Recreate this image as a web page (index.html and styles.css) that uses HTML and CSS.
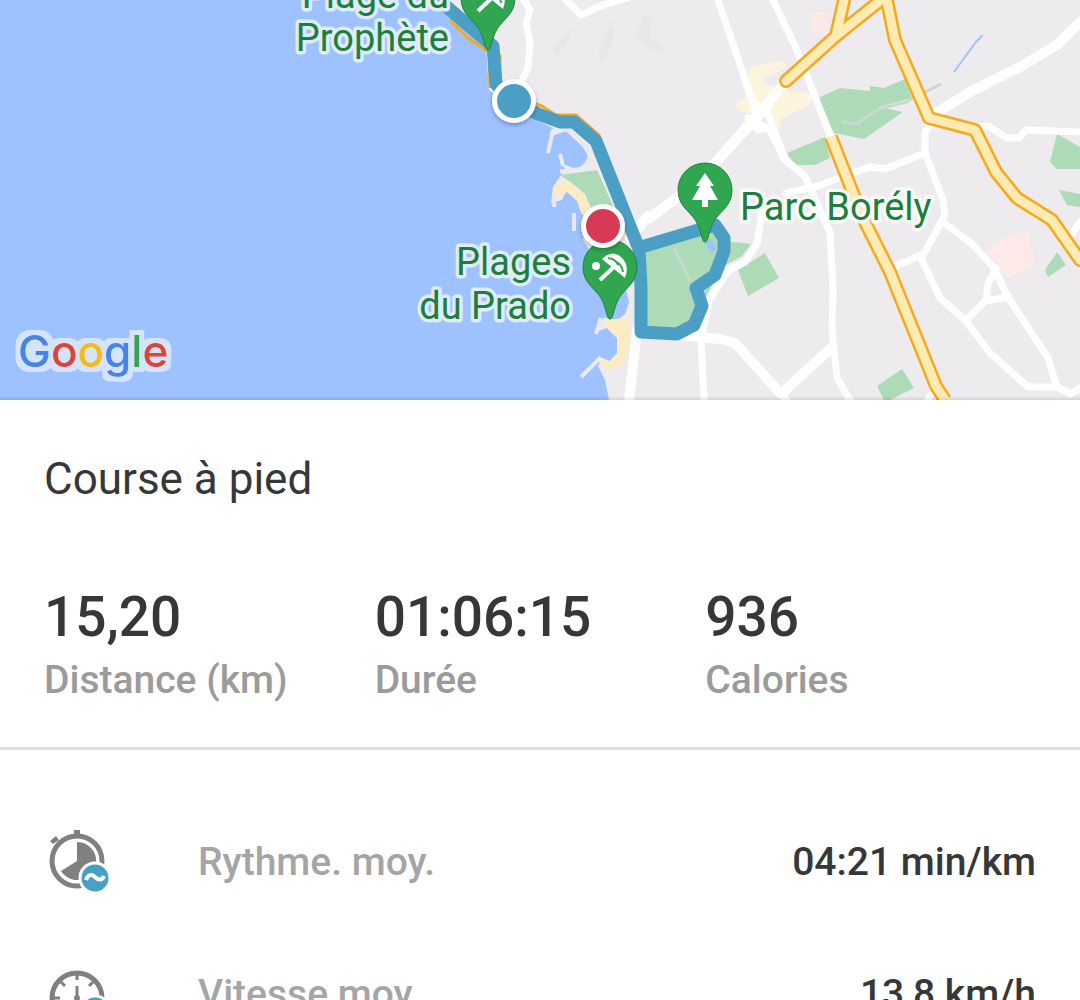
FILE: index.html
```html
<!DOCTYPE html>
<html lang="fr">
<head>
<meta charset="utf-8">
<meta name="viewport" content="width=device-width, initial-scale=1">
<title>Course à pied</title>
<link rel="stylesheet" href="styles.css">
</head>
<body>
<main class="activity">
  <section class="map" aria-label="Parcours">
    <svg class="map-canvas" viewBox="0 0 1080 400" role="img" aria-label="Carte du parcours">
      <defs>
        <filter id="shadow" x="-30%" y="-30%" width="160%" height="160%">
          <feDropShadow dx="0" dy="2" stdDeviation="2" flood-color="#000" flood-opacity=".3"/>
        </filter>
        <filter id="halo" x="-10%" y="-20%" width="120%" height="140%" color-interpolation-filters="sRGB">
          <feMorphology in="SourceAlpha" operator="dilate" radius="5" result="grown"/>
          <feFlood flood-color="#d6e4fb"/>
          <feComposite in2="grown" operator="in" result="ring"/>
          <feMerge><feMergeNode in="ring"/><feMergeNode in="SourceGraphic"/></feMerge>
        </filter>
        <linearGradient id="edge" x2="0" y2="1">
          <stop offset="0" stop-color="#000" stop-opacity="0"/>
          <stop offset="1" stop-color="#000" stop-opacity=".1"/>
        </linearGradient>
        <path id="pin" d="M0 0C-3 0-3-7-7-17C-13-31-27-34-27-52A27 27 0 0 1 27-52C27-34 13-31 7-17C3-7 3 0 0 0Z"/>
        <g id="parasol" fill="none" stroke="#fff">
          <path d="M-10-39L7-55" stroke-width="4"/>
          <path d="M-8-60Q2-70 11-62Q20-54 15-41Z" fill="#fff" stroke="none"/>
          <path d="M-2-61Q6-60 8-54M13-47Q12-54 7-57" stroke="#30a650" stroke-width="2"/>
        </g>
      </defs>

      <!-- land and sea -->
      <rect class="land" width="1080" height="400"/>
      <path class="sea" d="M0 0H440L462 24L486 48L489 90L512 108L553 128L552 136L566 131L584 148L590 160L587 166L573 168L561 163L565 169L553 187L551 203L562 200L566 191L578 198L583 213L585 224L583 240L602 270L626 290L629 302L625 314L615 322L604 317L598 331L607 328L617 338L617 353L609 362L602 358L598 366L605 380L609 400H0Z"/>
      <g class="pier">
        <path d="M553 130L548 153M560 154L563 166M555 193L554 207M601 318L596 334M601 357L581 377M574 213V231"/>
        <path d="M552 131Q568 125 580 139L590 155Q588 167 574 172L560 171" fill="none"/>
      </g>
      <path class="sand" d="M553 187L569 179L588 193L594 212L582 215L577 201L567 192L556 198ZM604 320L628 318L630 350L620 367L609 370L597 360L602 358L610 361L617 354V338L607 328Z"/>

      <!-- parks, blocks -->
      <g class="park">
        <path d="M560 175L597 170L615 210L592 210L585 194L572 183Z"/>
        <path d="M638 248L706 224L725 238L720 268L693 287L700 308L690 328L641 332Z"/>
        <path d="M725 241L751 244L742 256L724 266ZM738 270L765 253L779 278L748 296ZM705 286L714 281L703 303Z"/>
        <path d="M818 98L840 88L870 91V86L884 88L905 79L912 98L879 107L903 112L864 139L834 133ZM787 153L825 137L830 158L815 165L795 165Z"/>
        <path d="M1057 134L1080 147V169H1057L1050 162ZM1059 190L1080 194V207L1067 205ZM1045 270L1057 252L1066 265L1048 277ZM877 386L902 369L914 388L890 400H884Z"/>
      </g>
      <path class="mall" d="M747 79L752 66L784 61L787 67L763 79L765 84L787 90L814 94L811 104L780 119L781 131L773 119L740 111L735 105L746 97L743 87Z"/>
      <path class="clinic" d="M986 252L1006 237L1028 232L1030 247L1036 260L1029 270L1008 278ZM812 12H828V34H812Z"/>
      <path class="rock" d="M553 48L574 25L567 43L556 56ZM599 50L612 20L614 40L602 62ZM635 36L645 13L652 23L651 38L668 54L650 49Z"/>
      <path class="brook" d="M954 72L976 42L983 35M640 246L665 236"/>
      <path class="pond" d="M704 240Q714 236 716 250L711 253Z"/>
      <path class="path" d="M842 122L857 124L879 109L906 102L941 84M674 247L690 281"/>

      <!-- white roads -->
      <g class="road">
        <path class="wide" d="M650 218L700 180L785 83M700 180L768 105M648 216L630 238M928 118L970 92L1022 66L1058 44L1080 22"/>
        <path class="wide" d="M637 330L629 400M660 333L720 339L735 343L781 394L832 347"/>
        <path d="M566 0L581 15L603 5L636-5M718 0L753 103L757 123L770 130L784 159L805 176L820 211L830 232L833 290L832 329L837 378L850 400M773 0L796 48L834 145"/>
        <path d="M524 0L530 10L526 23L530 42L528 68L522 80M753 105L766 108L785 159M748 118L758 130L773 126M786 193L818 186L869 167L885 169L925 153M925 153L925 132L934 120M925 153L943 200L945 215L924 254L889 269M943 222L972 244L994 268L1008 297L1048 358L1057 387L1071 394L1080 388M920 256L940 298L965 320L990 353L1028 387H1058M966 320L985 301L1009 297M986 300L988 284L996 268"/>
        <path d="M965 128L988 126L1007 138L1019 138L1026 130L1080 132M1066 242L1080 222M764 201L757 244L745 262L729 270L709 300L701 340L704 400M781 393L787 400M928 400L933 391"/>
      </g>

      <!-- main roads: orange casing under a pale fill -->
      <g class="main-casing">
        <path d="M786 81L836 36L886 -4M836 36L844 0M886 -4L895 40L929 118L975 130L996 172L1017 198L1052 220L1080 260"/>
        <path class="flat" d="M831 137L862 216L890 272L936 386L945 400"/>
      </g>
      <g class="main-fill">
        <path d="M786 81L836 36L886 -4M836 36L844 0M886 -4L895 40L929 118L975 130L996 172L1017 198L1052 220L1080 260"/>
        <path class="flat" d="M831 137L862 216L890 272L936 386L945 400"/>
      </g>

      <!-- run -->
      <path class="coast-road" d="M448 4L482 34L500 56V90L542 106L556 115L576 115L599 135L609 167"/>
      <path class="coast-road" d="M450 20L468 38L489 52L490 88"/>
      <path class="run" d="M434 -4L475 31L493 46L496 84L512 100L538 114L560 122H574L596 141L639 249L641 287V332L677 334L694 325L702 306L696 288L715 275L724 251V238L715 225L638 248"/>

      <!-- places -->
      <g transform="translate(488 50)"><use href="#pin" class="pin"/><use href="#parasol"/></g>
      <g transform="translate(610 319)"><use href="#pin" class="pin"/><use href="#parasol"/><circle class="glyph" cx="-14" cy="-53" r="4"/></g>
      <g transform="translate(705 242)"><use href="#pin" class="pin"/><path class="glyph" d="M0-69L9-56H5L13-42H3V-35H-3V-42H-13L-5-56H-9Z"/></g>
      <g class="place">
        <text x="449" y="8" text-anchor="end">Plage du</text>
        <text x="449" y="51" text-anchor="end">Prophète</text>
        <text x="571" y="275" text-anchor="end">Plages</text>
        <text x="571" y="319" text-anchor="end">du Prado</text>
        <text class="inland" x="740" y="220">Parc Borély</text>
      </g>

      <!-- start and finish -->
      <g filter="url(#shadow)">
        <circle cx="514" cy="101" r="22" fill="#fff"/>
        <circle cx="603" cy="226" r="22" fill="#fff"/>
      </g>
      <circle class="start" cx="514" cy="101" r="17"/>
      <circle class="finish" cx="603" cy="226" r="17"/>

      <text class="brand" x="18" y="367" filter="url(#halo)"><tspan class="b">G</tspan><tspan class="r">o</tspan><tspan class="y">o</tspan><tspan class="b">g</tspan><tspan class="g">l</tspan><tspan class="r">e</tspan></text>
      <rect y="396" width="1080" height="4" fill="url(#edge)"/>
    </svg>
  </section>

  <section class="summary">
    <h1 class="title">Course à pied</h1>
    <dl class="totals">
      <div class="total"><dt>Distance (km)</dt><dd>15,20</dd></div>
      <div class="total"><dt>Durée</dt><dd>01:06:15</dd></div>
      <div class="total"><dt>Calories</dt><dd>936</dd></div>
    </dl>
  </section>

  <section class="details">
    <div class="row">
      <svg class="icon" viewBox="-1 1 64 64" aria-hidden="true">
        <path class="solid" d="M29 1H35V6H29ZM5 12L11 7L14 11L8 15Z"/>
        <circle class="ring" cx="32" cy="32" r="25"/>
        <path class="solid" d="M32 32V13A19 19 0 1 1 16 42Z"/>
        <circle class="badge" cx="50" cy="49" r="15"/>
        <path class="wave" d="M41 51C43 45 47 45 50 48S57 52 59 47"/>
      </svg>
      <span class="label">Rythme. moy.</span>
      <span class="value">04:21 min/km</span>
    </div>
    <div class="row">
      <svg class="icon" viewBox="-1 -4 64 64" aria-hidden="true">
        <circle class="ring" cx="32" cy="32" r="25"/>
        <path class="tick" d="M32 8V14M32 20V34M16 16L20 20M48 16L44 20M9 32H15M49 32H55"/>
        <circle class="solid" cx="32" cy="32" r="3"/>
        <circle class="badge" cx="50" cy="45" r="15"/>
        <path class="wave" d="M41 47C43 41 47 41 50 44S57 48 59 43"/>
      </svg>
      <span class="label">Vitesse moy.</span>
      <span class="value">13,8 km/h</span>
    </div>
  </section>
</main>
</body>
</html>
```
FILE: styles.css
```css
* { box-sizing: border-box; }
html { overflow-x: hidden; scrollbar-width: none; }
body {
  margin: 0;
  background: #fff;
  color: #363739;
  font-family: Roboto, "Liberation Sans", sans-serif;
}

/* map */
.map { overflow: hidden; }
.map-canvas { display: block; width: 100%; height: auto; }
.land { fill: #eeebef; }
.sea { fill: #9dc2ff; }
.park { fill: #addbb7; }
.sand { fill: #fcecc4; }
.mall { fill: #fdf4dd; }
.clinic { fill: #fde9e5; }
.rock { fill: #e5e7e8; }
.pond { fill: #9dc2ff; }
.brook { fill: none; stroke: #a3c3f3; stroke-width: 2; }
.path { fill: none; stroke: #c8d9d0; stroke-width: 3; }
.pier { fill: none; stroke: #e8eaf0; stroke-width: 4; }
.road { fill: none; stroke: #fff; stroke-width: 7; stroke-linejoin: round; stroke-linecap: round; }
.road .wide { stroke-width: 10; }
.main-casing, .main-fill { fill: none; stroke-linejoin: round; stroke-linecap: round; }
.main-casing { stroke: #f5a91d; stroke-width: 14; }
.main-fill { stroke: #ffebb3; stroke-width: 9; }
.flat { stroke-linecap: butt; }
.coast-road { fill: none; stroke: #f5a91d; stroke-width: 3; }
.run { fill: none; stroke: #4c9fc4; stroke-width: 13; stroke-linejoin: round; }
.pin { fill: #30a650; stroke: #1d8540; stroke-width: 1; }
.glyph { fill: #fff; }
.start { fill: #4c9fc4; }
.finish { fill: #d73a54; }
.place {
  fill: #1e7e3e;
  stroke: #deecf8;
  stroke-width: 7;
  stroke-linejoin: round;
  paint-order: stroke;
  font-size: 38px;
}
.inland { stroke: #f8fafa; }
.brand { font: 500 44px Inter, sans-serif; }
.b { fill: #4684ea; }
.r { fill: #dc4538; }
.y { fill: #f6bc15; }
.g { fill: #36a455; }

/* summary */
.summary { padding: 53px 44px 36px; border-bottom: 3px solid #dfdfdf; }
.title { margin: 0; font-size: 44px; line-height: 52px; font-weight: 400; }
.totals { display: grid; grid-template-columns: repeat(3, 1fr); margin: 80px 0 0; }
.total { display: flex; flex-direction: column-reverse; }
.total dt { color: #9b9b9b; font-size: 39px; line-height: 62px; font-weight: 500; }
.total dd { margin: 0; font-size: 55px; line-height: 64px; font-weight: 500; }

/* details */
.details { padding: 46px 44px 0; }
.row { display: flex; align-items: center; height: 132px; font-size: 39px; font-weight: 500; }
.icon { width: 64px; height: 64px; margin-right: 90px; overflow: visible; }
.label { flex: 1; color: #a5a5a5; }
.solid { fill: #808080; }
.ring { fill: none; stroke: #808080; stroke-width: 5; }
.tick { fill: none; stroke: #808080; stroke-width: 3; }
.badge { fill: #4a9fc4; stroke: #fff; stroke-width: 3; }
.wave { fill: none; stroke: #fff; stroke-width: 4; }
```
